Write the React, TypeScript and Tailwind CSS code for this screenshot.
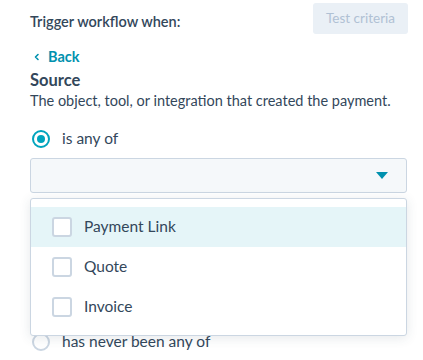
import React from "react";

const options = ["Payment Link", "Quote", "Invoice"];

function Radio({ checked, label }: { checked?: boolean; label: string }) {
  return (
    <label className="flex items-center gap-3 h-6 pl-[2px]">
      <span
        className={
          checked
            ? "w-[18px] h-[18px] rounded-full border-2 border-[#00a4bd] bg-white flex items-center justify-center"
            : "w-[18px] h-[18px] rounded-full border-2 border-[#cbd6e2] bg-white"
        }
      >
        {checked && <span className="w-2 h-2 rounded-full bg-[#00a4bd]" />}
      </span>
      <span className="text-[15.5px] text-[#33475b]">{label}</span>
    </label>
  );
}

export default function App() {
  return (
    <div
      className="w-[423px] h-[360px] overflow-hidden bg-white pl-[30px] pr-[15px] pt-[3px]"
      style={{ fontFamily: "Lato, 'Open Sans', sans-serif" }}
    >
      {/* HEADER */}
      <div className="flex items-center justify-between h-[31px]">
        <span className="text-[14.5px] font-semibold text-[#33475b] pt-[7px]">
          Trigger workflow when:
        </span>
        <button className="h-[31px] w-[95px] rounded-[3px] bg-[#eaf0f6] text-[13.5px] text-[#b0c1d4]">
          Test criteria
        </button>
      </div>

      {/* BACK */}
      <div className="mt-[13px] flex items-center gap-[6px] text-[#0091ae] font-bold text-[14.5px] h-5">
        <svg width="10" height="10" viewBox="0 0 10 10" className="ml-[2px]">
          <path d="M6 2.5 3.5 5 6 7.5" fill="none" stroke="#0091ae" strokeWidth="1.6" strokeLinecap="round" strokeLinejoin="round" />
        </svg>
        <span>Back</span>
      </div>

      <h2 className="mt-[3px] text-[16.5px] font-bold text-[#33475b] leading-5">Source</h2>
      <p className="mt-[1px] text-[14.5px] text-[#33475b] leading-5">
        The object, tool, or integration that created the payment.
      </p>

      <div className="mt-[16px]">
        <Radio checked label="is any of" />
      </div>

      {/* SELECT + MENU */}
      <div className="relative mt-[7px] w-[377px]">
        <div className="h-[35px] rounded-[3px] border border-[#cbd6e2] bg-[#f5f8fa] flex items-center justify-end pr-[18px]">
          <svg width="12" height="7" viewBox="0 0 12 7">
            <path d="M0 0h12L6 7z" fill="#0091ae" />
          </svg>
        </div>

        <div className="absolute left-0 right-0 top-full mt-[5px] z-10 rounded-[3px] border border-[#cbd6e2] bg-white shadow-[0_2px_12px_rgba(45,62,80,0.12)] pt-[8px] pb-[8px]">
          {options.map((o, i) => (
            <div
              key={o}
              className={
                i === 0
                  ? "h-10 flex items-center gap-3 pl-[21px] bg-[#e5f5f8]"
                  : "h-10 flex items-center gap-3 pl-[21px]"
              }
            >
              <span className="w-5 h-5 rounded-[3px] border-2 border-[#cbd6e2] bg-white" />
              <span className="text-[15.5px] text-[#33475b]">{o}</span>
            </div>
          ))}
        </div>
      </div>

      {/* last option, partly under the menu */}
      <div className="mt-[137px]">
        <Radio label="has never been any of" />
      </div>
    </div>
  );
}
